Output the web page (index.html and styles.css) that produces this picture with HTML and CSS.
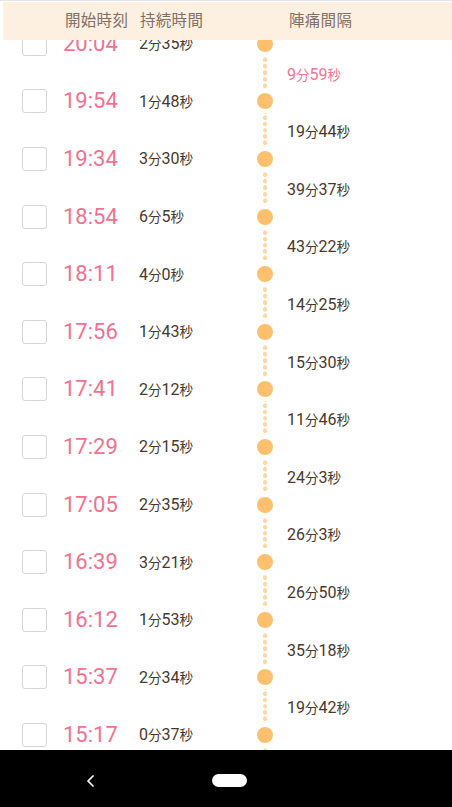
FILE: index.html
```html
<!DOCTYPE html>
<html lang="ja">
<head>
<meta charset="utf-8">
<title>陣痛記録</title>
<link rel="stylesheet" href="styles.css">
</head>
<body>
<div class="screen">
  <div class="content">
    <div class="thead">
      <span class="h-start">開始時刻</span>
      <span class="h-dur">持続時間</span>
      <span class="h-int">陣痛間隔</span>
    </div>
    <ul class="list">
      <li class="row"><span class="check"></span><span class="time">20:04</span><span class="dur">2<small>分</small>35<small>秒</small></span><span class="rail"><span class="dot"></span></span><span class="gap pink">9<small>分</small>59<small>秒</small></span></li>
      <li class="row"><span class="check"></span><span class="time">19:54</span><span class="dur">1<small>分</small>48<small>秒</small></span><span class="rail"><span class="dot"></span></span><span class="gap">19<small>分</small>44<small>秒</small></span></li>
      <li class="row"><span class="check"></span><span class="time">19:34</span><span class="dur">3<small>分</small>30<small>秒</small></span><span class="rail"><span class="dot"></span></span><span class="gap">39<small>分</small>37<small>秒</small></span></li>
      <li class="row"><span class="check"></span><span class="time">18:54</span><span class="dur">6<small>分</small>5<small>秒</small></span><span class="rail"><span class="dot"></span></span><span class="gap">43<small>分</small>22<small>秒</small></span></li>
      <li class="row"><span class="check"></span><span class="time">18:11</span><span class="dur">4<small>分</small>0<small>秒</small></span><span class="rail"><span class="dot"></span></span><span class="gap">14<small>分</small>25<small>秒</small></span></li>
      <li class="row"><span class="check"></span><span class="time">17:56</span><span class="dur">1<small>分</small>43<small>秒</small></span><span class="rail"><span class="dot"></span></span><span class="gap">15<small>分</small>30<small>秒</small></span></li>
      <li class="row"><span class="check"></span><span class="time">17:41</span><span class="dur">2<small>分</small>12<small>秒</small></span><span class="rail"><span class="dot"></span></span><span class="gap">11<small>分</small>46<small>秒</small></span></li>
      <li class="row"><span class="check"></span><span class="time">17:29</span><span class="dur">2<small>分</small>15<small>秒</small></span><span class="rail"><span class="dot"></span></span><span class="gap">24<small>分</small>3<small>秒</small></span></li>
      <li class="row"><span class="check"></span><span class="time">17:05</span><span class="dur">2<small>分</small>35<small>秒</small></span><span class="rail"><span class="dot"></span></span><span class="gap">26<small>分</small>3<small>秒</small></span></li>
      <li class="row"><span class="check"></span><span class="time">16:39</span><span class="dur">3<small>分</small>21<small>秒</small></span><span class="rail"><span class="dot"></span></span><span class="gap">26<small>分</small>50<small>秒</small></span></li>
      <li class="row"><span class="check"></span><span class="time">16:12</span><span class="dur">1<small>分</small>53<small>秒</small></span><span class="rail"><span class="dot"></span></span><span class="gap">35<small>分</small>18<small>秒</small></span></li>
      <li class="row"><span class="check"></span><span class="time">15:37</span><span class="dur">2<small>分</small>34<small>秒</small></span><span class="rail"><span class="dot"></span></span><span class="gap">19<small>分</small>42<small>秒</small></span></li>
      <li class="row"><span class="check"></span><span class="time">15:17</span><span class="dur">0<small>分</small>37<small>秒</small></span><span class="rail"><span class="dot"></span></span></li>
    </ul>
  </div>
  <nav class="navbar">
    <svg class="back" width="9" height="12" viewBox="0 0 9 12"><polyline points="7,1 2,6 7,11" fill="none" stroke="#fff" stroke-width="1.7" stroke-linecap="round" stroke-linejoin="round"/></svg>
    <span class="home"></span>
  </nav>
</div>
</body>
</html>
```

FILE: styles.css
```css
* { box-sizing: border-box; }

html, body {
  margin: 0;
  padding: 0;
  background: #fff;
}

body {
  font-family: Roboto, "Noto Sans CJK JP", sans-serif;
}

.screen {
  width: 452px;
  height: 807px;
  display: flex;
  flex-direction: column;
  overflow: hidden;
}

.content {
  position: relative;
  flex: 1;
  overflow: hidden;
  border-top: 1px solid #e4e4e4;
}

.thead {
  position: absolute;
  top: 1px;
  left: 3px;
  right: 0;
  height: 38px;
  z-index: 2;
  background: #fdf0e0;
  display: flex;
  align-items: flex-start;
  padding: 6px 0 0 62px;
  font-family: "Noto Sans CJK JP", sans-serif;
  font-size: 15.5px;
  line-height: 22px;
  color: #7d6f67;
  letter-spacing: 0.3px;
}

.h-start { width: 75px; }
.h-dur { width: 149px; }

.list {
  list-style: none;
  margin: 14px 0 0;
  padding: 0 0 0 22px;
}

.row {
  height: 57.6px;
  display: grid;
  grid-template-columns: 41px 76px 118px 16px 1fr;
  align-items: center;
}

.check {
  width: 25px;
  height: 24px;
  border: 1.5px solid #d6d6d6;
  border-radius: 3px;
  background: #fff;
}

.time {
  font-size: 22px;
  color: #f4708f;
  line-height: 1;
}

.dur, .gap {
  font-size: 16px;
  color: #46382f;
  line-height: 20px;
  white-space: nowrap;
}

.dur small, .gap small {
  font-family: "Noto Sans CJK JP", sans-serif;
  font-size: 13.5px;
}

.rail {
  align-self: stretch;
  display: flex;
  align-items: center;
  justify-content: center;
  background-image: radial-gradient(circle at center, #fdd8a6 0 2px, rgba(253, 216, 166, 0) 2.5px);
  background-size: 16px 6.4px;
  background-repeat: repeat-y;
  background-position: center -3.2px;
}

.dot {
  width: 16px;
  height: 16px;
  border-radius: 50%;
  background: #fec06c;
  box-shadow: 0 0 0 4px #fff;
}

.gap {
  align-self: end;
  margin-left: 14px;
  transform: translateY(calc(50% + 1px));
}

.gap.pink {
  color: #f57394;
}

.navbar {
  height: 57px;
  flex: none;
  background: #000;
  display: flex;
  align-items: center;
  padding: 4px 0 0 86px;
}

.back {
  display: block;
}

.home {
  margin-left: 117px;
  width: 35px;
  height: 13px;
  border-radius: 7px;
  background: #fff;
}
```
